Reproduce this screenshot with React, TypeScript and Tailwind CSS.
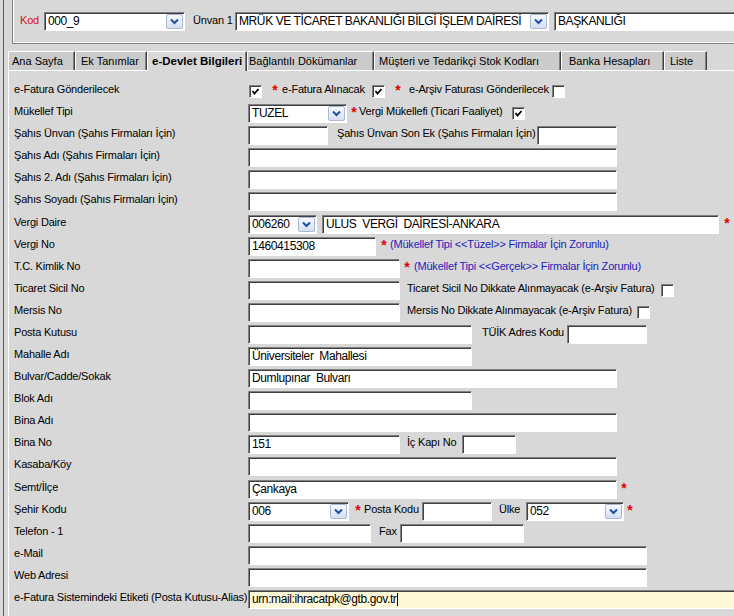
import React from "react";

const lbl = "font-['Liberation_Sans',sans-serif] text-[11px] leading-[13px] tracking-[-0.2px] whitespace-nowrap";
const fld = "font-['Liberation_Sans',sans-serif] text-[12px] leading-[14px] tracking-[-0.4px] text-black whitespace-pre";
const sunken =
  "h-[19px] shrink-0 flex items-center overflow-hidden border border-t-[#808080] border-l-[#808080] border-b-white border-r-white shadow-[inset_1px_1px_0_#404040]";

function Field({ className = "", value, yellow, caret }: { className?: string; value?: string; yellow?: boolean; caret?: boolean }) {
  return (
    <div className={`${sunken} ${yellow ? "bg-[#fff9d9]" : "bg-white"} ${className}`}>
      {value && <span className={`${fld} pl-[3px] mb-[1px]`}>{value}</span>}
      {caret && <span className="w-[1px] h-[13px] ml-[1px] bg-black" />}
    </div>
  );
}

function Combo({ className = "", value }: { className?: string; value: string }) {
  return (
    <div className={`${sunken} bg-white ${className}`}>
      <span className={`${fld} flex-1 pl-[3px] mb-[1px] overflow-hidden`}>{value}</span>
      <div className="w-[17px] h-[15px] mr-[1px] shrink-0 flex items-center justify-center border border-[#a9b8d6] rounded-[2px] bg-linear-to-b from-[#f7f9fd] to-[#d6e0f2]">
        <svg width="9" height="7" viewBox="0 0 9 7">
          <path d="M1 1.5 L4.5 5 L8 1.5" stroke="#1e4fa8" strokeWidth="2" fill="none" />
        </svg>
      </div>
    </div>
  );
}

function Check({ className = "", checked }: { className?: string; checked?: boolean }) {
  return (
    <div className={`w-[13px] h-[13px] shrink-0 bg-white border border-t-[#808080] border-l-[#808080] border-b-white border-r-white shadow-[inset_1px_1px_0_#404040] flex items-center justify-center ${className}`}>
      {checked && (
        <svg width="9" height="9" viewBox="0 0 9 9">
          <path d="M1.5 4 L3.5 6.5 L7.5 2" stroke="#000" strokeWidth="1.8" fill="none" />
        </svg>
      )}
    </div>
  );
}

function Star({ className = "" }: { className?: string }) {
  return (
    <span className={`w-[8px] shrink-0 text-center text-[#e00000] font-bold text-[14px] leading-none mb-[3px] font-['Liberation_Sans',sans-serif] ${className}`}>*</span>
  );
}

function Txt({ className = "", children, blue }: { className?: string; children: React.ReactNode; blue?: boolean }) {
  return <span className={`${lbl} ${blue ? "text-[#2222b8]" : "text-black"} mb-[4px] shrink-0 ${className}`}>{children}</span>;
}

function Row({ label, children, className = "" }: { label: string; children?: React.ReactNode; className?: string }) {
  return (
    <div className={`flex items-center h-[22px] shrink-0 ${className}`}>
      <span className={`${lbl} text-black w-[234px] shrink-0 mb-[4px]`}>{label}</span>
      {children}
    </div>
  );
}

const tabs = [
  { label: "Ana Sayfa", cls: "w-[67px] pl-[3px]" },
  { label: "Ek Tanımlar", cls: "w-[72px] pl-[5px]" },
  { label: "e-Devlet Bilgileri", cls: "w-[100px] pl-[4px]", active: true },
  { label: "Bağlantılı Dökümanlar", cls: "w-[127px] pl-[1px]" },
  { label: "Müşteri ve Tedarikçi Stok Kodları", cls: "w-[187px] pl-[4px]" },
  { label: "Banka Hesapları", cls: "w-[103px] pl-[7px]" },
  { label: "Liste", cls: "w-[43px] pl-[5px]" },
];

export default function App() {
  return (
    <div className="w-[734px] h-[616px] overflow-hidden bg-[#d8d8d8] flex">
      <div className="w-[3px] shrink-0" />
      <div className="w-[1px] shrink-0 bg-[#5a5a5a]" />
      <div className="flex-1 flex flex-col min-w-0">
        {/* üst grup */}
        <div className="ml-[8px] h-[44px] shrink-0 border-l border-b border-[#808080] shadow-[inset_1px_-1px_0_#ffffff] pt-[12px] pl-[7px] flex items-start">
          <div className="flex items-center h-[19px]">
            <span className={`${lbl} text-[#d81010] mb-[3px] w-[24px]`}>Kod</span>
            <Combo className="w-[141px]" value="000_9" />
            <span className={`${lbl} text-black ml-[8px] mb-[3px] w-[40px]`}>Ünvan 1</span>
            <Combo className="ml-[2px] w-[314px]" value="MRÜK VE TİCARET BAKANLIĞI BİLGİ İŞLEM DAİRESİ" />
            <Field className="ml-[5px] w-[200px]" value="BAŞKANLIĞI" />
          </div>
        </div>

        {/* sekmeler */}
        <div className="flex items-start h-[19px] ml-[4px] mt-[7px] shrink-0">
          {tabs.map((t) => (
            <div
              key={t.label}
              className={`relative flex items-center overflow-hidden whitespace-nowrap font-['Liberation_Sans',sans-serif] text-black border-t border-l border-t-white border-l-white border-r border-r-[#404040] shadow-[inset_-1px_0_0_#808080] ${
                t.active ? "h-[20px] z-10 bg-[#d8d8d8] font-bold text-[11.5px]" : "h-[19px] bg-[#cbcbcb] text-[11px]"
              } ${t.cls}`}
            >
              {t.label}
            </div>
          ))}
        </div>

        {/* panel */}
        <div className="flex-1 ml-[4px] border-t border-l border-white pt-[9px] pl-[5px] flex flex-col">
          <Row label="e-Fatura Gönderilecek">
            <Check className="ml-[1px]" checked />
            <Star className="ml-[9px]" />
            <Txt className="ml-[3px] w-[87px]">e-Fatura Alınacak</Txt>
            <Check className="ml-[3px]" checked />
            <Star className="ml-[9px]" />
            <Txt className="ml-[7px] w-[139px]">e-Arşiv Faturası Gönderilecek</Txt>
            <Check className="ml-[4px]" />
          </Row>
          <Row label="Mükellef Tipi">
            <Combo className="w-[99px]" value="TUZEL" />
            <Star className="ml-[3px]" />
            <Txt className="ml-[1px] w-[150px]">Vergi Mükellefi (Ticari Faaliyet)</Txt>
            <Check className="ml-[3px]" checked />
          </Row>
          <Row label="Şahıs Ünvan (Şahıs Firmaları İçin)">
            <Field className="w-[80px]" />
            <Txt className="ml-[9px] w-[196px]">Şahıs Ünvan Son Ek (Şahıs Firmaları İçin)</Txt>
            <Field className="ml-[4px] w-[80px]" />
          </Row>
          <Row label="Şahıs Adı (Şahıs Firmaları İçin)">
            <Field className="w-[369px]" />
          </Row>
          <Row label="Şahıs 2. Adı (Şahıs Firmaları İçin)">
            <Field className="w-[369px]" />
          </Row>
          <Row label="Şahıs Soyadı (Şahıs Firmaları İçin)">
            <Field className="w-[369px]" />
          </Row>
          <Row label="Vergi Daire" className="mt-[1px]">
            <Combo className="w-[69px]" value="006260" />
            <Field className="ml-[5px] w-[397px]" value="ULUS  VERGİ  DAİRESİ-ANKARA" />
            <Star className="ml-[4px]" />
          </Row>
          <Row label="Vergi No">
            <Field className="w-[128px]" value="1460415308" />
            <Star className="ml-[4px]" />
            <Txt blue className="ml-[2px]">(Mükellef Tipi &lt;&lt;Tüzel&gt;&gt; Firmalar İçin Zorunlu)</Txt>
          </Row>
          <Row label="T.C. Kimlik No">
            <Field className="w-[152px]" />
            <Star className="ml-[3px]" />
            <Txt blue className="ml-[3px]">(Mükellef Tipi &lt;&lt;Gerçek&gt;&gt; Firmalar İçin Zorunlu)</Txt>
          </Row>
          <Row label="Ticaret Sicil No">
            <Field className="w-[152px]" />
            <Txt className="ml-[7px] w-[250px]">Ticaret Sicil No Dikkate Alınmayacak (e-Arşiv Fatura)</Txt>
            <Check className="ml-[4px]" />
          </Row>
          <Row label="Mersis No">
            <Field className="w-[152px]" />
            <Txt className="ml-[7px] w-[226px]">Mersis No Dikkate Alınmayacak (e-Arşiv Fatura)</Txt>
            <Check className="ml-[4px]" />
          </Row>
          <Row label="Posta Kutusu">
            <Field className="w-[224px]" />
            <Txt className="ml-[10px] w-[81px]">TÜİK Adres Kodu</Txt>
            <Field className="ml-[4px] w-[80px]" />
          </Row>
          <Row label="Mahalle Adı">
            <Field className="w-[224px]" value="Üniversiteler  Mahallesi" />
          </Row>
          <Row label="Bulvar/Cadde/Sokak">
            <Field className="w-[369px]" value="Dumlupınar  Bulvarı" />
          </Row>
          <Row label="Blok Adı">
            <Field className="w-[224px]" />
          </Row>
          <Row label="Bina Adı">
            <Field className="w-[369px]" />
          </Row>
          <Row label="Bina No">
            <Field className="w-[152px]" value="151" />
            <Txt className="ml-[7px] w-[51px]">İç Kapı No</Txt>
            <Field className="ml-[4px] w-[54px]" />
          </Row>
          <Row label="Kasaba/Köy">
            <Field className="w-[369px]" />
          </Row>
          <Row label="Semt/İlçe" className="mt-[1px]">
            <Field className="w-[369px]" value="Çankaya" />
            <Star className="ml-[3px]" />
          </Row>
          <Row label="Şehir Kodu">
            <Combo className="w-[101px]" value="006" />
            <Star className="ml-[5px]" />
            <Txt className="ml-[2px] w-[56px]">Posta Kodu</Txt>
            <Field className="ml-[2px] w-[70px]" />
            <Txt className="ml-[7px] w-[24px]">Ülke</Txt>
            <Combo className="ml-[3px] w-[98px]" value="052" />
            <Star className="ml-[2px]" />
          </Row>
          <Row label="Telefon - 1">
            <Field className="w-[123px]" />
            <Txt className="ml-[8px] w-[18px]">Fax</Txt>
            <Field className="ml-[3px] w-[124px]" />
          </Row>
          <Row label="e-Mail">
            <Field className="w-[399px]" />
          </Row>
          <Row label="Web Adresi">
            <Field className="w-[399px]" />
          </Row>
          <Row label="e-Fatura Sistemindeki Etiketi (Posta Kutusu-Alias)">
            <Field className="w-[490px]" yellow caret value="urn:mail:ihracatpk@gtb.gov.tr" />
          </Row>
        </div>
      </div>
    </div>
  );
}
